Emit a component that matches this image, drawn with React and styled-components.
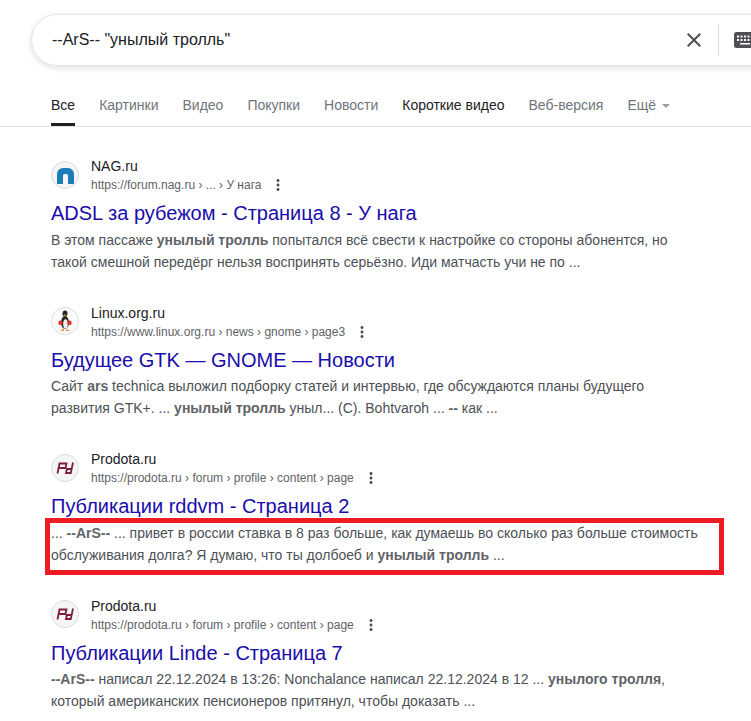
import React from 'react'
import styled, { createGlobalStyle } from 'styled-components'

const Global = createGlobalStyle`
  html, body {
    margin: 0;
    height: 100%;
    overflow: hidden;
    background: #fff;
    font-family: "Liberation Sans", Arial, sans-serif;
  }
`

const Page = styled.div`
  width: 751px;
  height: 721px;
  overflow: hidden;
  background: #fff;
`

const SearchWrap = styled.div`
  box-sizing: border-box;
  padding: 14px 0 0 31px;
  width: 800px;
`

const SearchBox = styled.div`
  display: flex;
  align-items: center;
  height: 50px;
  padding-left: 20px;
  border: 1px solid #e4e4e6;
  border-radius: 26px;
  box-shadow: 0 2px 5px 1px rgba(64, 60, 67, 0.12);
`

const Query = styled.div`
  flex: 1;
  font-size: 16px;
  color: #202124;
`

const ClearIcon = styled.svg`
  width: 24px;
  height: 24px;
  fill: #4d5156;
  margin-right: 12px;
`

const Divider = styled.div`
  width: 1px;
  height: 32px;
  background: #dadce0;
  margin-right: 14px;
`

const KeyboardIcon = styled.svg`
  width: 24px;
  height: 24px;
  margin-right: 42px;
  flex: none;
`

const Tabs = styled.div`
  display: flex;
  gap: 24px;
  height: 60px;
  padding-left: 51px;
  border-bottom: 1px solid #e3e4e6;
`

const Tab = styled.div`
  position: relative;
  padding-top: 29px;
  font-size: 14px;
  line-height: 20px;
  color: ${p => (p.$active || p.$dark ? '#202124' : '#70757a')};
  ${p => p.$active && `
    &::after {
      content: '';
      position: absolute;
      left: 0;
      right: 0;
      bottom: 0;
      height: 3px;
      background: #202124;
    }
  `}
`

const Caret = styled.span`
  display: inline-block;
  margin-left: 6px;
  vertical-align: 2px;
  border-left: 4px solid transparent;
  border-right: 4px solid transparent;
  border-top: 4px solid #9aa0a6;
`

const Results = styled.div`
  padding: 29px 0 0 51px;
`

const Result = styled.div`
  height: 146.67px;
`

const Source = styled.div`
  display: flex;
  align-items: center;
  gap: 12px;
  height: 38px;
`

const Favicon = styled.div`
  width: 26px;
  height: 26px;
  display: flex;
  align-items: center;
  justify-content: center;
  flex: none;
  margin-top: -1px;
  border: 1px solid #dadce0;
  border-radius: 50%;
  background: #f3f5f6;
  overflow: hidden;
`

const SiteName = styled.div`
  font-size: 14px;
  line-height: 20px;
  color: #202124;
`

const UrlRow = styled.div`
  display: flex;
  align-items: center;
  height: 18px;
  font-size: 12px;
  color: #4d5156;
`

const Crumbs = styled.span`
  color: #5f6368;
`

const MoreIcon = styled.svg`
  width: 18px;
  height: 18px;
  margin-left: 8px;
  fill: #4d5156;
`

const Title = styled.a`
  display: block;
  margin-top: 6px;
  font-size: 20px;
  line-height: 26px;
  color: #1a0dab;
  text-decoration: none;
`

const Snippet = styled.div`
  position: relative;
  width: 650px;
  margin-top: ${p => (p.$tight ? '2px' : '3px')};
  font-size: 14px;
  line-height: 22px;
  color: #4d5156;
  white-space: nowrap;

  b {
    color: #5f6368;
  }
`

const Highlight = styled.div`
  position: absolute;
  box-sizing: border-box;
  left: -6px;
  top: -4px;
  width: 679px;
  height: 57px;
  border: 5px solid #ed1c24;
`

const NagLogo = () => (
  <svg width="26" height="26" viewBox="0 0 26 26">
    <path d="M5 22V12a6 6 0 0 1 6-6h5a6 6 0 0 1 6 6v10h-6V13.500a1.500 1.500 0 0 0-1.500-1.500h-2a1.500 1.500 0 0 0-1.500 1.500V22z" fill="#1c7cba" />
  </svg>
)

const TuxLogo = () => (
  <svg width="26" height="26" viewBox="0 0 26 26">
    <circle cx="13" cy="13" r="13" fill="#fbfbfb" />
    <ellipse cx="13" cy="14.500" rx="4" ry="6.500" fill="#222" />
    <ellipse cx="13.500" cy="16" rx="2.300" ry="4.800" fill="#eee" />
    <ellipse cx="13" cy="5.500" rx="2.500" ry="3" fill="#222" />
    <path d="M11.500 6.500h3L13 8.500z" fill="#e0a030" />
    <rect x="6.500" y="12.500" width="4" height="4.500" rx="1.500" fill="#d33" />
    <rect x="15.500" y="12.500" width="4" height="4.500" rx="1.500" fill="#d33" />
    <path d="M8 23l3.500-2.500.8 2.500zM13.700 23l.8-2.500 3.500 2.500z" fill="#e0a030" />
  </svg>
)

const ProdotaLogo = () => (
  <svg width="26" height="26" viewBox="0 0 26 26" fill="none" stroke="#7d1f3c" strokeWidth="1.800">
    <path d="M5.500 18.500L7.500 8.500h7l-1 4.500H6.600" />
    <path d="M21 7.500L18.800 18H14l.9-4h4.900" />
  </svg>
)

const MoreVert = () => (
  <MoreIcon viewBox="0 0 24 24">
    <path d="M12 8c1.100 0 2-.9 2-2s-.9-2-2-2-2 .9-2 2 .9 2 2 2zm0 2c-1.100 0-2 .9-2 2s.9 2 2 2 2-.9 2-2-.9-2-2-2zm0 6c-1.100 0-2 .9-2 2s.9 2 2 2 2-.9 2-2-.9-2-2-2z" />
  </MoreIcon>
)

const results = [
  {
    logo: <NagLogo />,
    site: 'NAG.ru',
    url: 'https://forum.nag.ru › ... › У нага',
    title: 'ADSL за рубежом - Страница 8 - У нага',
    snippet: <>В этом пассаже <b>унылый тролль</b> попытался всё свести к настройке со стороны абонентся, но<br />такой смешной передёрг нельзя воспринять серьёзно. Иди матчасть учи не по ...</>,
  },
  {
    logo: <TuxLogo />,
    site: 'Linux.org.ru',
    url: 'https://www.linux.org.ru › news › gnome › page3',
    title: 'Будущее GTK — GNOME — Новости',
    tight: true,
    snippet: <>Сайт <b>ars</b> technica выложил подборку статей и интервью, где обсуждаются планы будущего<br />развития GTK+. ... <b>унылый тролль</b> уныл... (C). Bohtvaroh ... <b>--</b> как ...</>,
  },
  {
    logo: <ProdotaLogo />,
    site: 'Prodota.ru',
    url: 'https://prodota.ru › forum › profile › content › page',
    title: 'Публикации rddvm - Страница 2',
    marked: true,
    snippet: <>... <b>--ArS--</b> ... привет в россии ставка в 8 раз больше, как думаешь во сколько раз больше стоимость<br />обслуживания долга? Я думаю, что ты долбоеб и <b>унылый тролль</b> ...</>,
  },
  {
    logo: <ProdotaLogo />,
    site: 'Prodota.ru',
    url: 'https://prodota.ru › forum › profile › content › page',
    title: 'Публикации Linde - Страница 7',
    tight: true,
    snippet: <><b>--ArS--</b> написал 22.12.2024 в 13:26: Nonchalance написал 22.12.2024 в 12 ... <b>унылого тролля</b>,<br />который американских пенсионеров притянул, чтобы доказать ...</>,
  },
]

const tabs = ['Все', 'Картинки', 'Видео', 'Покупки', 'Новости', 'Короткие видео', 'Веб-версия']

export default function App() {
  return (
    <Page>
      <Global />
      <SearchWrap>
        <SearchBox>
          <Query>--ArS-- "унылый тролль"</Query>
          <ClearIcon viewBox="0 0 24 24">
            <path d="M19 6.410L17.590 5 12 10.590 6.410 5 5 6.410 10.590 12 5 17.590 6.410 19 12 13.410 17.590 19 19 17.590 13.410 12z" />
          </ClearIcon>
          <Divider />
          <KeyboardIcon viewBox="0 0 24 24">
            <rect x="1" y="4" width="22" height="16" rx="2.500" fill="#4d5156" />
            <path d="M4 7.500h2v2H4zM7.500 7.500h2v2h-2zM11 7.500h2v2h-2zM14.500 7.500h2v2h-2zM18 7.500h2v2h-2zM4 11h2v2H4zM7.500 11h2v2h-2zM11 11h2v2h-2zM14.500 11h2v2h-2zM18 11h2v2h-2zM7 15h10v1.600H7z" fill="#fff" />
          </KeyboardIcon>
        </SearchBox>
      </SearchWrap>
      <Tabs>
        {tabs.map((t, i) => (
          <Tab key={t} $active={i === 0} $dark={t === 'Короткие видео'}>{t}</Tab>
        ))}
        <Tab>Ещё<Caret /></Tab>
      </Tabs>
      <Results>
        {results.map((r, i) => (
          <Result key={i}>
            <Source>
              <Favicon>{r.logo}</Favicon>
              <div>
                <SiteName>{r.site}</SiteName>
                <UrlRow><Crumbs>{r.url}</Crumbs><MoreVert /></UrlRow>
              </div>
            </Source>
            <Title href="#">{r.title}</Title>
            <Snippet $tight={r.tight}>
              {r.marked && <Highlight />}
              {r.snippet}
            </Snippet>
          </Result>
        ))}
      </Results>
    </Page>
  )
}
